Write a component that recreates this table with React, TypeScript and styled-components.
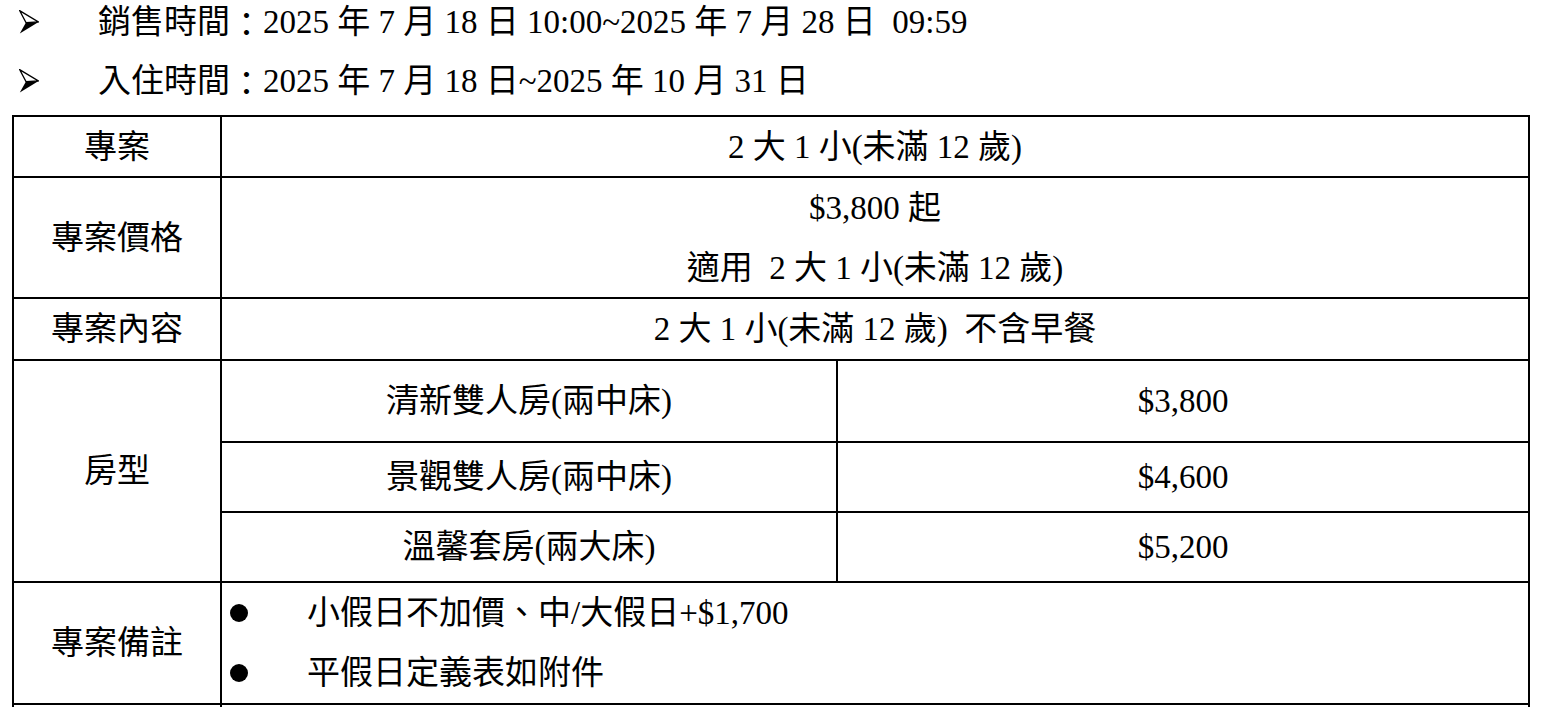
import React from "react";
import styled, { createGlobalStyle } from "styled-components";

const GlobalStyle = createGlobalStyle`
    html, body {
        margin: 0;
        padding: 0;
        background: #ffffff;
    }
    body {
        font-family: "Liberation Serif", "Noto Sans CJK TC", serif;
        color: #000000;
        overflow: hidden;
    }
`;

const Page = styled.div`
    padding: 0 0 40px 12px;
    font-size: 33px;
`;

const InfoList = styled.ul`
    list-style: none;
    margin: 0 0 12px 0;
    padding: 0;
    display: flex;
    flex-direction: column;
    gap: 15px;
`;

const InfoItem = styled.li`
    display: flex;
    align-items: center;
    height: 44px;
    line-height: 44px;
    white-space: pre;
`;

const ArrowMark = styled.svg`
    flex: 0 0 auto;
    width: 20px;
    height: 24px;
    margin-left: 7px;
    margin-right: 59px;
`;

// full-width colon, centred in its box like the Ming face of the original
const Colon = styled.span`
    display: inline-block;
    width: 1em;
    text-align: center;
    font-family: "Noto Sans CJK JP", "Noto Sans CJK TC", sans-serif;
`;

const Grid = styled.div`
    display: grid;
    grid-template-columns: 206px 614px 690px;
    grid-template-rows: 59px 119px 60px 80px 68px 68px 120px 60px;
    gap: 2px;
    padding: 2px;
    width: max-content;
    background: #000000;
`;

const Cell = styled.div<{ $span?: number; $rows?: number }>`
    background: #ffffff;
    display: flex;
    flex-direction: column;
    align-items: center;
    justify-content: center;
    line-height: 60px;
    white-space: pre;
    grid-column: span ${(p) => p.$span || 1};
    grid-row: span ${(p) => p.$rows || 1};
`;

const NoteList = styled.ul`
    list-style: none;
    margin: 0;
    padding: 0 0 0 8px;
    align-self: stretch;
`;

const NoteItem = styled.li`
    display: grid;
    grid-template-columns: 77px 1fr;
    align-items: center;
    line-height: 60px;
`;

const Dot = styled.span`
    width: 18px;
    height: 18px;
    border-radius: 50%;
    background: #000000;
`;

const Arrow = () => (
    <ArrowMark viewBox="0 0 20 24">
        <polygon points="0.6,0.6 19.4,12 7,12.6" fill="#ffffff" stroke="#000000" strokeWidth="1.3" strokeLinejoin="miter" />
        <polygon points="7,12.4 19.6,12 0.8,23.6" fill="#000000" />
    </ArrowMark>
);

const rooms = [
    { name: "清新雙人房(兩中床)", price: "$3,800" },
    { name: "景觀雙人房(兩中床)", price: "$4,600" },
    { name: "溫馨套房(兩大床)", price: "$5,200" },
];

const notes = ["小假日不加價、中/大假日+$1,700", "平假日定義表如附件"];

const App = () => {
    return (
        <Page lang="zh-TW">
            <GlobalStyle />
            <InfoList>
                <InfoItem>
                    <Arrow />
                    銷售時間<Colon lang="ja">：</Colon>2025 年 7 月 18 日 10:00~2025 年 7 月 28 日{"\u00a0 "}09:59
                </InfoItem>
                <InfoItem>
                    <Arrow />
                    入住時間<Colon lang="ja">：</Colon>2025 年 7 月 18 日~2025 年 10 月 31 日
                </InfoItem>
            </InfoList>
            <Grid>
                <Cell>專案</Cell>
                <Cell $span={2}>2 大 1 小(未滿 12 歲)</Cell>

                <Cell>專案價格</Cell>
                <Cell $span={2}>
                    <div>$3,800 起</div>
                    <div>適用{"\u00a0 "}2 大 1 小(未滿 12 歲)</div>
                </Cell>

                <Cell>專案內容</Cell>
                <Cell $span={2}>2 大 1 小(未滿 12 歲){"\u00a0 "}不含早餐</Cell>

                <Cell $rows={3}>房型</Cell>
                {rooms.map((room) => (
                    <React.Fragment key={room.name}>
                        <Cell>{room.name}</Cell>
                        <Cell>{room.price}</Cell>
                    </React.Fragment>
                ))}

                <Cell>專案備註</Cell>
                <Cell $span={2}>
                    <NoteList>
                        {notes.map((note) => (
                            <NoteItem key={note}>
                                <Dot />
                                <span>{note}</span>
                            </NoteItem>
                        ))}
                    </NoteList>
                </Cell>

                <Cell />
                <Cell $span={2} />
            </Grid>
        </Page>
    );
};

export default App;
